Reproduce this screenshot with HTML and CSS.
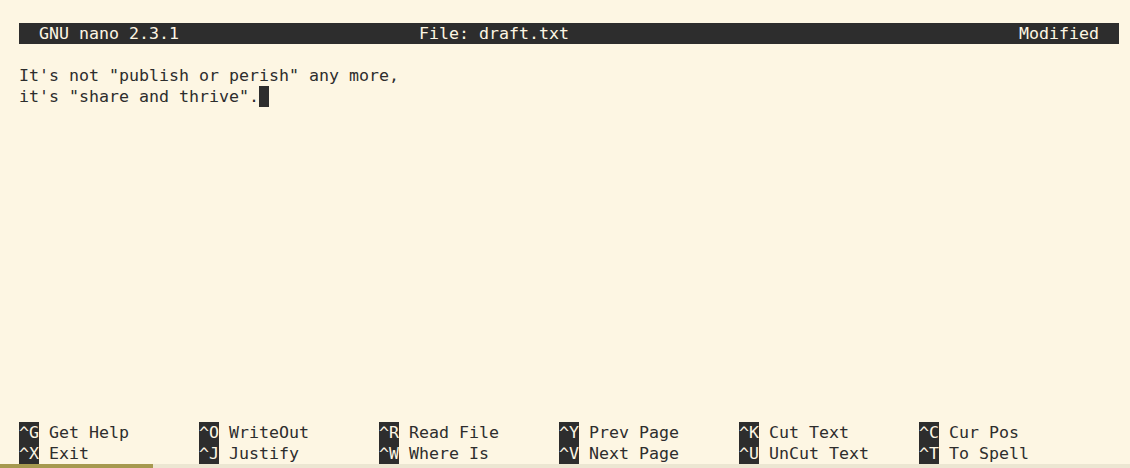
FILE: index.html
```html
<!DOCTYPE html>
<html>
<head>
<meta charset="utf-8">
<link rel="stylesheet" href="styles.css">
</head>
<body>
<div class="term">
  <div class="row titlebar"><span class="t-left">  GNU nano 2.3.1</span><span class="t-mid">File: draft.txt</span><span class="t-right">Modified  </span></div>
  <div class="row"></div>
  <div class="row">It's not "publish or perish" any more,</div>
  <div class="row">it's "share and thrive".<span class="cursor"> </span></div>
  <div class="spacer"></div>
  <div class="row shortcuts">
    <span class="sc"><span class="key">^G</span> Get Help</span>
    <span class="sc"><span class="key">^O</span> WriteOut</span>
    <span class="sc"><span class="key">^R</span> Read File</span>
    <span class="sc"><span class="key">^Y</span> Prev Page</span>
    <span class="sc"><span class="key">^K</span> Cut Text</span>
    <span class="sc"><span class="key">^C</span> Cur Pos</span>
  </div>
  <div class="row shortcuts">
    <span class="sc"><span class="key">^X</span> Exit</span>
    <span class="sc"><span class="key">^J</span> Justify</span>
    <span class="sc"><span class="key">^W</span> Where Is</span>
    <span class="sc"><span class="key">^V</span> Next Page</span>
    <span class="sc"><span class="key">^U</span> UnCut Text</span>
    <span class="sc"><span class="key">^T</span> To Spell</span>
  </div>
</div>
<div class="scrollbar"><div class="thumb"></div></div>
</body>
</html>
```
FILE: styles.css
```css
html, body {
  margin: 0;
  padding: 0;
  background: #fdf6e3;
  overflow: hidden;
}
body {
  width: 1130px;
  height: 468px;
}
.term {
  box-sizing: border-box;
  height: 464px;
  padding: 23px 0 0 19px;
  display: flex;
  flex-direction: column;
  font-family: "DejaVu Sans Mono", monospace;
  font-size: 16.61px;
  color: #2d2d2d;
}
.row {
  height: 21px;
  line-height: 21px;
  white-space: pre;
  width: 1100px;
}
.titlebar {
  background: #2d2d2d;
  color: #fdf6e3;
  display: grid;
  grid-template-columns: 400px 1fr auto;
}
.spacer {
  flex: 1;
}
.cursor {
  display: inline-block;
  width: 10px;
  height: 21px;
  vertical-align: top;
  background: #2d2d2d;
}
.shortcuts {
  display: grid;
  grid-template-columns: repeat(6, 180px);
}
.sc {
  white-space: pre;
}
.key {
  background: #2d2d2d;
  color: #fdf6e3;
  display: inline-block;
  height: 21px;
  vertical-align: top;
}
.scrollbar {
  height: 4px;
  background: #ece6d2;
}
.thumb {
  width: 153px;
  height: 4px;
  background: #a6994f;
}
```
